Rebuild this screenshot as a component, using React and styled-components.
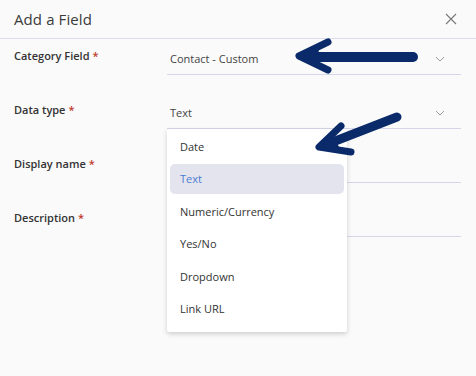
import styled, { createGlobalStyle } from 'styled-components'

const GlobalStyle = createGlobalStyle`
  body {
    margin: 0;
    background: #fafafa;
    font-family: "Open Sans", "Liberation Sans", sans-serif;
  }
`

const Modal = styled.div`
  position: relative;
  width: 476px;
  height: 376px;
  background: #fafafa;
  overflow: hidden;
`

const Header = styled.div`
  height: 38px;
  display: flex;
  align-items: center;
  justify-content: space-between;
  padding: 0 19px 0 14px;
  border-bottom: 1px solid #dcdcee;
`

const Title = styled.h2`
  margin: 0;
  font-size: 15px;
  font-weight: 400;
  color: #3a3a3a;
  letter-spacing: 0.1px;
`

const Form = styled.div`
  display: flex;
  flex-direction: column;
  gap: 18px;
  padding: 0 15px 0 14px;
`

const Row = styled.div`
  position: relative;
  display: grid;
  grid-template-columns: 153px 1fr;
  height: 36px;
`

const Label = styled.div`
  padding-top: 10px;
  font-size: 11px;
  line-height: 14px;
  font-weight: 600;
  color: #333;
`

const Star = styled.span`
  color: #c0392b;
  margin-left: 3px;
`

const Field = styled.div`
  display: flex;
  align-items: flex-end;
  justify-content: space-between;
  padding: 0 16px 8px 3px;
  border-bottom: 1px solid #d6d6ea;
  font-size: 11px;
  line-height: 14px;
  color: #444;
`

const Menu = styled.div`
  position: absolute;
  left: 153px;
  top: 36px;
  width: 180px;
  padding: 2px 3px 6px;
  box-sizing: border-box;
  background: #fff;
  box-shadow: 0 2px 5px rgba(0, 0, 0, 0.18);
  border-radius: 2px;
  z-index: 2;
`

const Item = styled.div`
  height: 30px;
  margin-bottom: 2.5px;
  padding: 0 10px;
  display: flex;
  align-items: center;
  border-radius: 5px;
  font-size: 11px;
  color: ${p => (p.$active ? '#4a7bd0' : '#333')};
  background: ${p => (p.$active ? '#e4e4ee' : 'transparent')};
`

const Arrows = styled.svg`
  position: absolute;
  left: 0;
  top: 0;
  pointer-events: none;
  z-index: 3;
`

const Chevron = () => (
  <svg width="10" height="6" viewBox="0 0 10 6" style={{ marginBottom: 4 }}>
    <path d="M1 1 L5 5 L9 1" fill="none" stroke="#9a9a9a" strokeWidth="1" />
  </svg>
)

const CloseIcon = () => (
  <svg width="12" height="12" viewBox="0 0 12 12">
    <path d="M1 1 L11 11 M11 1 L1 11" fill="none" stroke="#777" strokeWidth="1.1" />
  </svg>
)

const options = ['Date', 'Text', 'Numeric/Currency', 'Yes/No', 'Dropdown', 'Link URL']

export default function App() {
  return (
    <Modal>
      <GlobalStyle />
      <Header>
        <Title>Add a Field</Title>
        <CloseIcon />
      </Header>
      <Form>
        <Row>
          <Label>Category Field<Star>*</Star></Label>
          <Field>Contact - Custom<Chevron /></Field>
        </Row>
        <Row>
          <Label>Data type<Star>*</Star></Label>
          <Field>Text<Chevron /></Field>
          <Menu>
            {options.map(o => (
              <Item key={o} $active={o === 'Text'}>{o}</Item>
            ))}
          </Menu>
        </Row>
        <Row>
          <Label>Display name<Star>*</Star></Label>
          <Field />
        </Row>
        <Row>
          <Label>Description<Star>*</Star></Label>
          <Field />
        </Row>
      </Form>
      <Arrows width="476" height="376" viewBox="0 0 476 376">
        <g fill="#0a2a6a" stroke="#0a2a6a" strokeLinecap="round" strokeLinejoin="round">
          <path d="M413 57 L305 57" strokeWidth="10" fill="none" />
          <path d="M328 42 L299 56 L328 70" strokeWidth="7" fill="none" />
          <path d="M300 56 L318 47 L316 57 L318 66 Z" strokeWidth="3" />
          <path d="M397 117 L325 145" strokeWidth="9" fill="none" />
          <path d="M341 126 L319 147 L351 152" strokeWidth="7" fill="none" />
          <path d="M319 147 L331 134 L334 141 L339 150 Z" strokeWidth="3" />
        </g>
      </Arrows>
    </Modal>
  )
}
